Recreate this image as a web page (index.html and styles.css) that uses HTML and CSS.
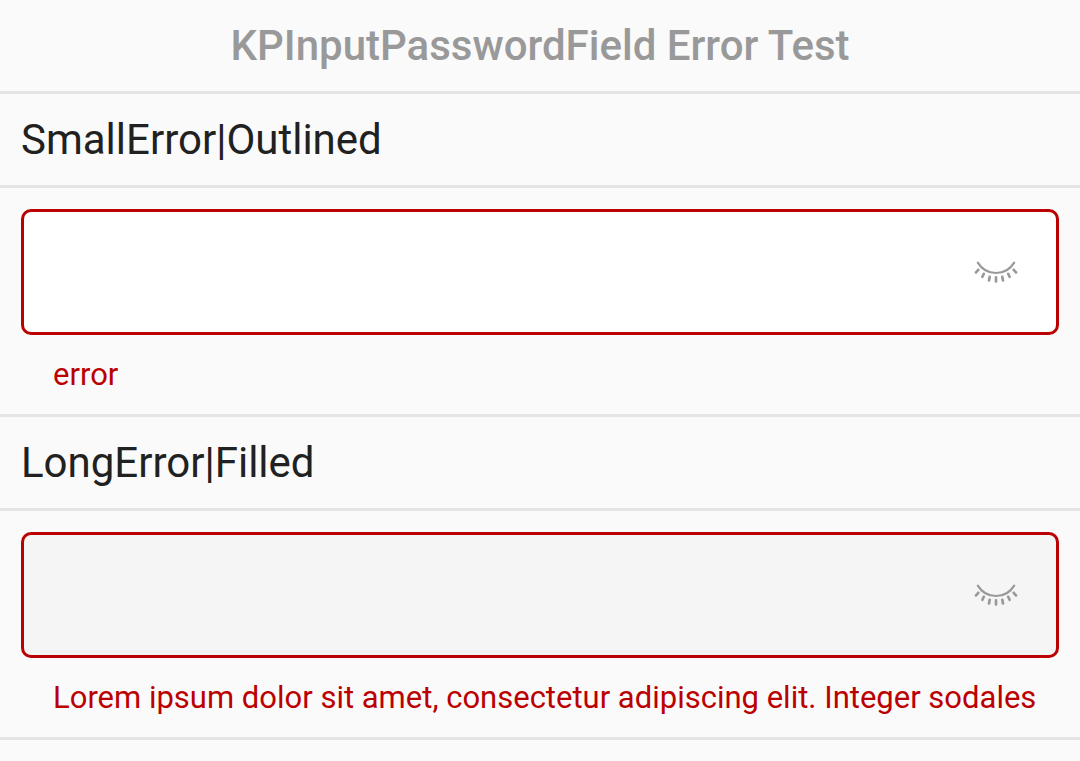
FILE: index.html
```html
<!DOCTYPE html>
<html lang="en">
<head>
<meta charset="utf-8">
<meta name="viewport" content="width=device-width, initial-scale=1">
<title>KPInputPasswordField Error Test</title>
<link rel="stylesheet" href="styles.css">
</head>
<body>
<main>
<h1 class="title">KPInputPasswordField Error Test</h1>
<h2 class="heading"><label for="small">SmallError|Outlined</label></h2>
<section class="row">
<div class="field">
<input class="input" id="small" type="password" aria-invalid="true" aria-describedby="small-error">
<button class="toggle" type="button" aria-label="Show password"><svg class="icon" viewBox="0 0 46 24"><path d="M4.8 2.6C9 9.5 15.5 13 23 13S37 9.5 41.2 2.6"/><path class="lashes" d="M5.3 9.8L3 12.4M10.8 13.8L9.4 16.8M16.7 16.8L16 20.4M23 17.4V21.4M29.3 16.8L30 20.4M35.2 13.8L36.6 16.8M40.7 9.8L43 12.4"/></svg></button>
</div>
<p class="error" id="small-error">error</p>
</section>
<h2 class="heading"><label for="long">LongError|Filled</label></h2>
<section class="row">
<div class="field filled">
<input class="input" id="long" type="password" aria-invalid="true" aria-describedby="long-error">
<button class="toggle" type="button" aria-label="Show password"><svg class="icon" viewBox="0 0 46 24"><path d="M4.8 2.6C9 9.5 15.5 13 23 13S37 9.5 41.2 2.6"/><path class="lashes" d="M5.3 9.8L3 12.4M10.8 13.8L9.4 16.8M16.7 16.8L16 20.4M23 17.4V21.4M29.3 16.8L30 20.4M35.2 13.8L36.6 16.8M40.7 9.8L43 12.4"/></svg></button>
</div>
<p class="error" id="long-error">Lorem ipsum dolor sit amet, consectetur adipiscing elit. Integer sodales</p>
</section>
</main>
</body>
</html>
```
FILE: styles.css
```css
* { box-sizing: border-box; }
body { margin: 0; background: #fafafa; color: #212121; font-family: Roboto, sans-serif; }
.title, .heading, .row { margin: 0; border-bottom: 3px solid #e4e4e4; }
.title, .heading { font-size: 42px; line-height: 50px; padding: 21px 21px 20px; }
.title { color: #999; font-weight: 500; text-align: center; }
.heading { font-weight: 400; }
.row { padding: 21px; }
.field { display: flex; align-items: center; height: 126px; border: 3px solid #ba0000; border-radius: 10px; background: #fff; padding-right: 37px; }
.filled { background: #f5f5f5; }
.input { flex: 1; min-width: 0; height: 100%; border: 0; outline: 0; background: transparent; padding: 0 30px; font: inherit; font-size: 42px; }
.toggle { border: 0; padding: 0; background: transparent; display: flex; }
.icon { width: 46px; height: 24px; fill: none; stroke: #999; stroke-width: 2.2; stroke-linecap: round; }
.lashes { stroke-width: 2.7; }
.error { margin: 22px 0 0; padding: 0 0 0 32px; color: #ba0000; font-size: 31px; line-height: 36px; }
```
